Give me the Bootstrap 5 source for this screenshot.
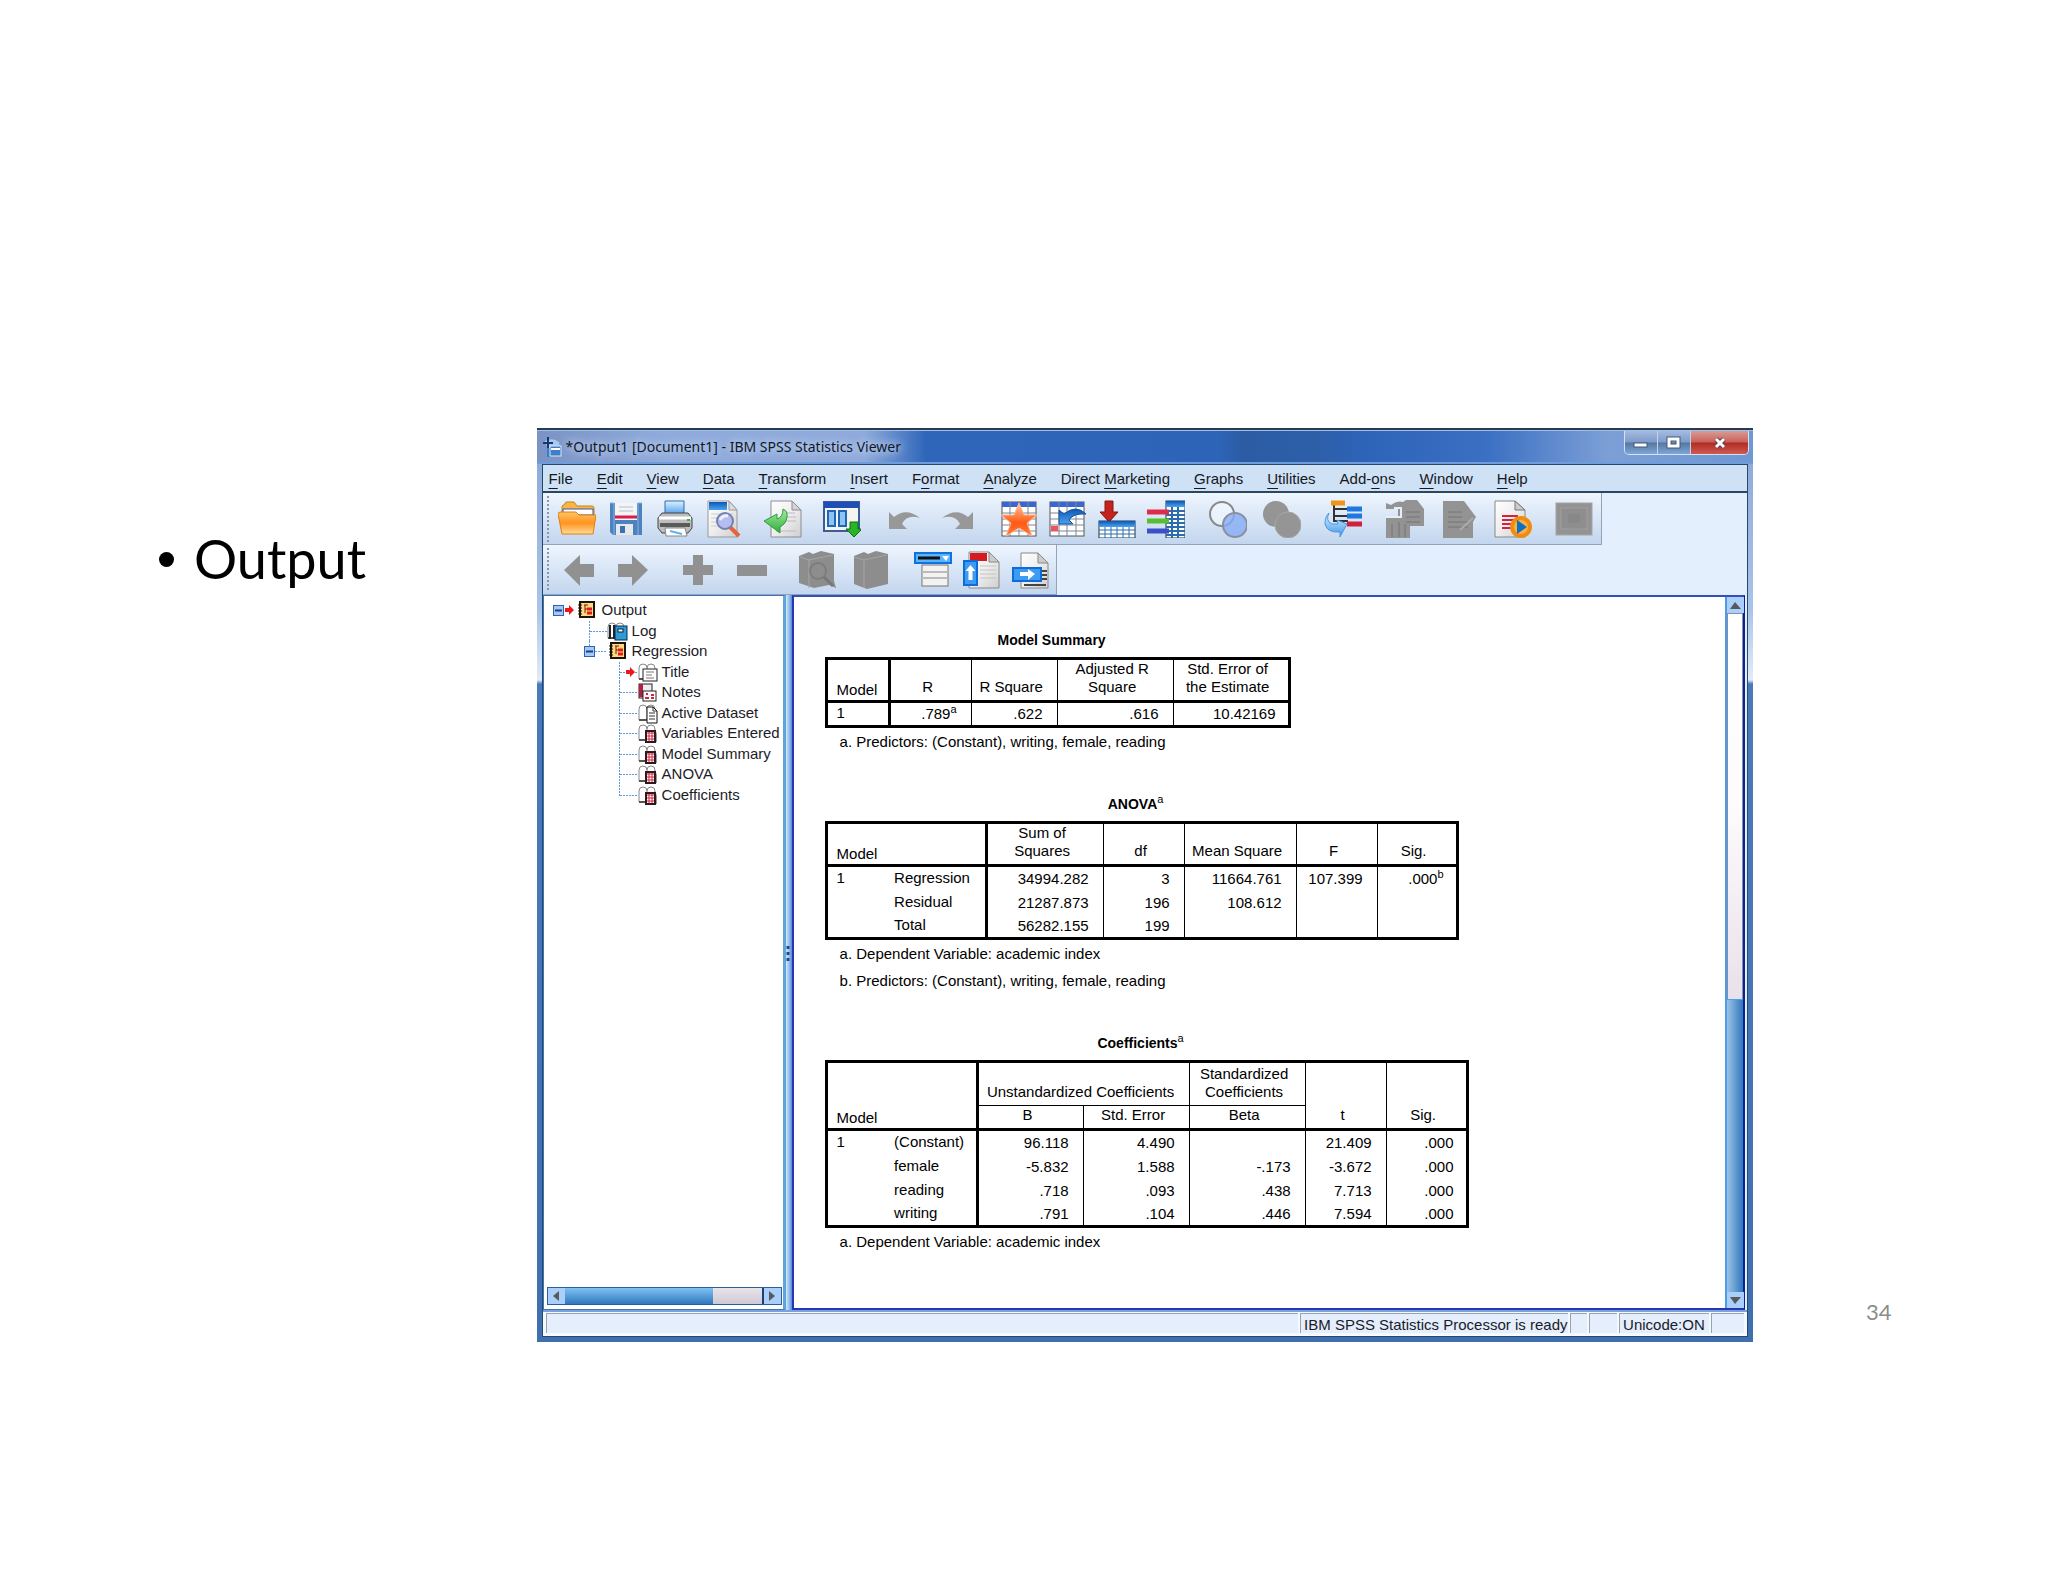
<!DOCTYPE html>
<html lang="en">
<head>
<meta charset="utf-8">
<meta name="viewport" content="width=device-width, initial-scale=1">
<title>Output</title>
<link rel="stylesheet" href="https://cdn.jsdelivr.net/npm/bootstrap@5.3.0/dist/css/bootstrap.min.css">
<style>
body{background:#fff;color:#000;font-family:"Liberation Sans",Arial,sans-serif;font-size:15px;line-height:20px}
.slide{min-height:100vh;padding-top:428px}
.side-l{width:26.2%;flex:none;padding-left:159px;padding-top:99px}
.side-r{flex:1 1 0;padding-left:113px;padding-bottom:18px}
.bullets{font-family:Lato,sans-serif;font-size:54px;line-height:64px}
.bullets li::before{content:"";width:15px;height:15px;border-radius:50%;background:#000}
.bullets li{gap:20px}
.pageno{font-family:Lato,sans-serif;font-size:22px;line-height:24px;color:#8c8c8c}
/* window frame */
.win{width:59.4%;flex:none;min-width:1110px;border-top:2px solid #2c3a50;background:linear-gradient(#8aa6d6 0,#a9c4e8 180px,#e2ecf8 250px,#4a7ab8 254px,#3f6fb0 100%);padding:0 5px 5px 5px}
.titlebar{height:34px;margin:0 -5px;padding-left:5px;border-top:1px solid #9cc0ec;border-bottom:2px solid #6f9ddb;background:linear-gradient(90deg,#7a92c4 0,#8faadb 10%,#8faadb 27%,#2f66b9 32%,#2e64b8 56%,#2b5ca4 58%,#2d5fa8 64%,#2e64b8 68%,#3a6fc2 78%,#7c9fd6 88%,#6f97d2 100%)}
.titlebar h1{font-family:"Noto Sans",sans-serif;font-size:14px;line-height:26px;font-weight:400;color:#101828;text-shadow:0 0 8px #c4d6f2,0 0 8px #c4d6f2}
.capbtns{height:24px;border:1px solid #d4e2f6;border-top:0;border-radius:0 0 5px 5px;overflow:hidden}
.capbtns button{border:0;padding:0;border-right:1px solid #c3d3ea;background:linear-gradient(#a5bbdf,#7d9bcc 48%,#54789f 52%,#7fa6d8);width:33px;display:flex;align-items:center;justify-content:center}
.capbtns .b-close{width:57px;border-right:0;background:linear-gradient(#d99c96,#c8625a 48%,#b02c24 52%,#cf5b50)}
.client{border:1px solid #24486e;background:#e4effd}
.menus{height:28px;background:#cfe1f5;border-bottom:2px solid #2b4660;padding-left:6px;gap:24px;line-height:27px}
.menus a{color:#15181f;text-decoration:none}
.menus u{text-underline-offset:4px;text-decoration-thickness:1px}
.bars{height:102px}
.tb{align-items:center;border-right:1px solid #93a3b5;border-bottom:1px solid #93a3b5;background:linear-gradient(#eef5fe,#c3d6ee);position:relative;padding:0 2px 0 10px}
.tb1{height:52px;gap:10px}.tb2{height:50px;gap:11px;padding:0 0 0 9px}
.tb::before{content:"";position:absolute;left:3px;top:2px;bottom:2px;width:4px;background:radial-gradient(#8797ab 1px,transparent 1px) 0 0/4px 4px}
.tb button{border:0;background:none;padding:0;width:49px;height:48px;display:flex;align-items:center;justify-content:center}
.tb .wide button{width:54px}
.tb svg{width:38px;height:38px}
/* panes */
.tree-pane{width:243px;flex:none;background:#fff;border:1px solid #3f74b4;border-right:3px solid #62a3d8;padding:4px 1px 4px 3px}
.splitter{width:6px;flex:none;background:linear-gradient(90deg,#cfeafb,#8ab9ee 60%,#5d86d0)}
.out-pane{border:2px solid #2a35b4;border-top-color:#3350b8;border-right:2px solid #0d2190;background:#fff;margin-right:2px}
.tree{height:205px;display:grid;grid-auto-rows:1fr;margin:0;padding:0 0 0 3px;list-style:none}
.tree a{display:flex;align-items:center;color:#1c1c28;text-decoration:none;white-space:nowrap}
.tree svg{height:20px;flex:none;overflow:visible}
.hbar{height:18px;border:1px solid #2b5f9c}
.hbar button,.vbar button{border:0;padding:0;background:#a9cffa;width:17px;height:16px;display:flex;align-items:center;justify-content:center;flex:none}
.hbar .thumb{flex:150 1 0;background:linear-gradient(#7fc2f2,#2f78be)}
.hbar .track{flex:49 1 0;background:linear-gradient(#e9e4ea,#cfc9d6);border-right:2px solid #1e3f78}
.vbar{width:18px;flex:none;border-left:2px solid #4f9be8}
.vbar .thumb{flex:291 1 0;background:linear-gradient(90deg,#9cc4e4,#2f78be)}
.vbar .track{flex:384 1 0;background:linear-gradient(#fff 0,#fdfbfb 50%,#e9e1ea 100%);border:1px solid #8091a8;border-bottom:1px solid #4fa0ea}
/* pivot tables */
.out{padding:33px 0 53px 31px}
.out section{width:max-content;margin-bottom:39px}
.out section:last-child{margin-bottom:0}
.out h2{font-size:14px;line-height:20px;font-weight:700;margin:0 0 7px;padding-right:12px;text-align:center}
.out sup{font-size:11px;top:-6px}
.out h2 sup{font-weight:400}
.pv{table-layout:fixed;border-collapse:collapse;border:3px solid #000;line-height:18px}
.pv th{font-weight:400;text-align:center;vertical-align:bottom;padding:0 10px 4px 4px;border:1px solid #000;border-bottom:3px solid #000}
.pv th.grp{border-bottom-width:1px;height:44px;padding-bottom:4px}
.pv th.sub-h{border-bottom-width:3px;vertical-align:top;height:24px;padding-bottom:0}
.pv td{text-align:right;padding:0 14px 0 0;height:24px;border-left:1px solid #000;border-right:1px solid #000}
.pv td:last-child{padding-right:12px}
.pv tbody tr:first-child td{height:25px}
.pv .stub{text-align:left;border-right:3px solid #000;padding:0 0 1px 9px}
.pv td.stub{padding-bottom:2px}
.pv td.num{border-right:0;text-align:left;padding:0 0 2px 9px}
.pv td.num+td.stub{border-left:0;padding-left:5px}
.notes{padding-left:15px;line-height:27px}
.notes p{margin:0}
/* status bar */
.status{height:26px;border-top:2px solid #7aa3dc;border-bottom:1px solid #fff;padding:1px 3px 2px;background:#f4f8ff;gap:2px}
.status div{border-left:1px solid #97a3b1;border-top:1px solid #97a3b1;background:#e4eefd;padding-left:3px;color:#1a1c26;white-space:nowrap;line-height:21px}
.s1{width:268px}.s2{width:17px}.s3{width:28px}.s4{width:90px}.s5{width:33px}
</style>
<script src="https://cdn.jsdelivr.net/npm/bootstrap@5.3.0/dist/js/bootstrap.bundle.min.js"></script>
</head>
<body>
<svg width="0" height="0" class="position-absolute" aria-hidden="true">
<defs>
<linearGradient id="gOr" x1="0" y1="0" x2="0" y2="1"><stop offset="0" stop-color="#ffc468"/><stop offset=".5" stop-color="#ff9420"/><stop offset="1" stop-color="#ffdc9a"/></linearGradient>
<linearGradient id="gPg" x1="0" y1="0" x2="1" y2="1"><stop offset="0" stop-color="#fff"/><stop offset=".5" stop-color="#eee"/><stop offset="1" stop-color="#cfcfcf"/></linearGradient>
<linearGradient id="gBl" x1="0" y1="0" x2="0" y2="1"><stop offset="0" stop-color="#0a58b8"/><stop offset="1" stop-color="#4aa3ee"/></linearGradient>
<linearGradient id="gLb" x1="0" y1="0" x2="0" y2="1"><stop offset="0" stop-color="#dff3ff"/><stop offset="1" stop-color="#3a94ea"/></linearGradient>
<linearGradient id="gSt" x1="0" y1="0" x2="0" y2="1"><stop offset="0" stop-color="#ffc9a0"/><stop offset=".6" stop-color="#ff5a14"/><stop offset="1" stop-color="#ff7a3a"/></linearGradient>
<linearGradient id="gGn" x1="0" y1="0" x2="0" y2="1"><stop offset="0" stop-color="#a4eaa0"/><stop offset="1" stop-color="#2fae3a"/></linearGradient>
<g id="page"><path d="M5 1h21l9 9v27H5z" fill="url(#gPg)" stroke="#8e8e8e"/><path d="M26 1v9h9z" fill="#d4d4d4" stroke="#8e8e8e"/></g>
<g id="book"><path d="M1 17V6q0-4 4-4t4 4q0-4 4-4t4 4v11z" fill="#fff" stroke="#888"/><path d="M1 17h17" stroke="#555" stroke-width="2"/><path d="M9 6v12" stroke="#888"/></g>
<g id="out-ic"><rect x="2" y="2" width="14" height="15" fill="#ffd980" stroke="#1c1408" stroke-width="2"/><path d="M0 5h4M0 8h4M0 11h4M0 14h4" stroke="#1c1408"/><path d="M6 5h4M7 5v8M7 9h2" stroke="#7a1410" fill="none"/><path d="M9 9h5M9 13h5" stroke="#e01c1c" stroke-width="3"/></g>
<g id="tab-ic"><use href="#book"/><path d="M16 6q3 2 3 5v8h-2z" fill="#999"/><rect x="8" y="8" width="9" height="11" fill="#fff" stroke="#2c1a20" stroke-width="2"/><path d="M9 10h7M9 13h7M9 16h7" stroke="#d8203a"/><path d="M11 9v9M14 9v9" stroke="#d8203a"/></g>
<g id="mns"><rect x=".5" y=".5" width="10" height="10" fill="#a6c8f4" stroke="#2c62b0"/><path d="M2 5.500h7" stroke="#17408c" stroke-width="2"/></g>
<path id="rarr" d="M0 3h4V0l5 5-5 5V7H0z" fill="#f0141c"/>
</defs>
</svg>

<main class="slide">
<div class="d-flex">
<div class="side-l"><ul class="bullets list-unstyled m-0"><li class="d-flex align-items-center">Output</li></ul></div>

<div class="win">
<header class="titlebar d-flex justify-content-between">
 <div class="d-flex align-items-center">
  <svg width="20" height="20" viewBox="0 0 20 20"><path d="M3 4q8-4 14 1l2 13H8z" fill="#a9c9ee"/><path d="M1 6h10M6 0v12" stroke="#12386e" stroke-width="2"/><path d="M5 11h4v9H5z" fill="#3d7fc6"/><rect x="8" y="9" width="11" height="10" fill="#3f7fc8" stroke="#d7e8fb"/><path d="M9 12h9" stroke="#fff" stroke-width="2"/></svg>
  <h1 class="m-0 ms-1">*Output1 [Document1] - IBM SPSS Statistics Viewer</h1>
 </div>
 <div class="capbtns d-flex me-1">
  <button aria-label="Minimize"><svg width="16" height="14"><rect x="1" y="7" width="13" height="4" fill="#fff" stroke="#46597a"/></svg></button>
  <button aria-label="Maximize"><svg width="16" height="14"><rect x="3" y="3" width="9" height="7" fill="none" stroke="#46597a" stroke-width="5"/><rect x="3" y="3" width="9" height="7" fill="none" stroke="#fff" stroke-width="3"/></svg></button>
  <button class="b-close" aria-label="Close"><svg width="16" height="14"><path d="M4 3l8 8M12 3l-8 8" stroke="#6b3a44" stroke-width="5"/><path d="M4 3l8 8M12 3l-8 8" stroke="#fff" stroke-width="3"/></svg></button>
 </div>
</header>
<div class="client">
<nav class="menus d-flex">
<a href="#"><u>F</u>ile</a><a href="#"><u>E</u>dit</a><a href="#"><u>V</u>iew</a><a href="#"><u>D</u>ata</a><a href="#"><u>T</u>ransform</a><a href="#"><u>I</u>nsert</a><a href="#">F<u>o</u>rmat</a><a href="#"><u>A</u>nalyze</a><a href="#">Direct <u>M</u>arketing</a><a href="#"><u>G</u>raphs</a><a href="#"><u>U</u>tilities</a><a href="#">Add-<u>o</u>ns</a><a href="#"><u>W</u>indow</a><a href="#"><u>H</u>elp</a>
</nav>
<div class="bars d-flex flex-column align-items-start">
<div class="tb tb1 d-flex" role="toolbar" aria-label="Main">
 <div class="d-flex">
 <button aria-label="Open"><svg viewBox="0 0 38 38"><path d="M4 33V7q0-2 2-2l2-3h8l3 4h15q2 0 2 2v10z" fill="#f7b646" stroke="#c98412"/><path d="M5 9h30v6H5z" fill="#fff" stroke="#3a56b8"/><path d="M0 14q0-2 3-2h15l3 3h17l-3 19H4z" fill="url(#gOr)" stroke="#e07f10"/></svg></button>
 <button aria-label="Save"><svg viewBox="0 0 38 38"><path d="M3 3h32v32H6l-3-3z" fill="#4d82c0"/><path d="M3 3h4v32M35 3h-4v32" stroke="#86b2e0" fill="none"/><rect x="8" y="3" width="22" height="17" fill="#f4f4f6"/><path d="M12 7h14M12 11h14" stroke="#b8bcc8"/><path d="M8 17h22" stroke="#d81e48" stroke-width="3"/><rect x="9" y="24" width="17" height="11" fill="#e6e8ec"/><rect x="13" y="26" width="5" height="7" fill="#3d72b0"/></svg></button>
 <button aria-label="Print"><svg viewBox="0 0 38 38"><path d="M9 1h19v15H9z" fill="url(#gLb)" stroke="#2c6cb0"/><path d="M6 13h26l4 5v10l-4 5H6l-4-5V18z" fill="#bdbdbd" stroke="#444"/><path d="M3 18h32" stroke="#fff" stroke-width="3"/><path d="M4 23h30v4H4z" fill="#5a5a5a"/><path d="M31 20h3" stroke="#3ab43a" stroke-width="2"/><path d="M9 28h20l2 8H10z" fill="#fff" stroke="#888"/><path d="M14 31l12 3" stroke="#6ab0e8" stroke-width="2"/></svg></button>
 <button aria-label="Print preview"><svg viewBox="0 0 38 38"><path d="M3 1h21l8 9v27H3z" fill="url(#gPg)" stroke="#999"/><path d="M4 2h18v8H4z" fill="url(#gBl)"/><path d="M24 1v9h8z" fill="#ddd" stroke="#999"/><path d="M6 14h22M6 18h22M6 22h22M6 26h22" stroke="#ccc"/><path d="M25 27l9 9" stroke="#e8633a" stroke-width="4"/><circle cx="20" cy="21" r="8" fill="#b3bdf0" stroke="#7680ae" stroke-width="2"/><path d="M15 20q3-5 8-4" stroke="#eef" stroke-width="3" fill="none"/></svg></button>
 </div>
 <div><button aria-label="Export"><svg viewBox="0 0 38 38"><use href="#page" x="2"/><path d="M22 13h9M23 17h9M20 21h12M12 31h20" stroke="#bbb"/><path d="M19 9q5 2 4 8-1 7-7 10v6L0 21l13-7v5q6-2 6-10z" fill="url(#gGn)" stroke="#2f9a3c"/></svg></button></div>
 <div><button aria-label="Recall dialog"><svg viewBox="0 0 38 38"><rect x="1" y="2" width="35" height="29" fill="#f4f4f0" stroke="#3c5c98" stroke-width="2"/><path d="M1 2h35v6H1z" fill="#1d4fb4"/><rect x="5" y="11" width="7" height="15" fill="#8cc4f4" stroke="#1f68b8" stroke-width="2"/><rect x="16" y="11" width="7" height="15" fill="#8cc4f4" stroke="#1f68b8" stroke-width="2"/><path d="M27 22h8v7h4l-8 8-8-8h4z" fill="#28b428" stroke="#107010"/></svg></button></div>
 <div class="d-flex wide">
 <button aria-label="Undo"><svg viewBox="0 0 38 38"><path d="M4 12l5 5q12-10 26 1-13-4-18 6l5 5H4z" fill="#989898"/></svg></button>
 <button aria-label="Redo"><svg viewBox="0 0 38 38"><path d="M34 12l-5 5Q17 7 3 18q13-4 18 6l-5 5h18z" fill="#989898"/></svg></button>
 </div>
 <div class="d-flex">
 <button aria-label="Go to data"><svg viewBox="0 0 38 38"><rect x="2" y="2" width="34" height="34" fill="#fff" stroke="#555"/><path d="M2 2h34v5H2z" fill="#3a66d0"/><path d="M2 13h34M2 19h34M2 25h34M2 31h34M10 2v34M19 2v34M28 2v34" stroke="#7d8796"/><path d="M19 3l5 12h13l-10 8 5 13-13-8-13 8 5-13L1 15h13z" fill="url(#gSt)" stroke="#ffb48c"/></svg></button>
 <button aria-label="Go to case"><svg viewBox="0 0 38 38"><rect x="1" y="2" width="34" height="34" fill="#fff" stroke="#555"/><path d="M1 2h34v5H1z" fill="#3a66d0"/><path d="M1 13h34M1 19h34M1 25h34M1 31h34M10 2v34M18 2v34M27 2v34" stroke="#7d8796"/><path d="M2 26h7v5H2z" fill="#f05060"/><path d="M10 10v14h14l-4-4q4-7 17-6Q27 4 15 14z" fill="url(#gBl)" stroke="#1f4e98"/></svg></button>
 <button aria-label="Go to variable"><svg viewBox="0 0 38 38"><path d="M7 1h8v11h5l-9 10-9-10h5z" fill="#c4221c" stroke="#8c1410"/><rect x="1" y="21" width="36" height="17" fill="#fff" stroke="#234"/><path d="M1 21h36v6H1z" fill="url(#gBl)"/><path d="M1 30h36M1 34h36M7 27v11M13 27v11M19 27v11M25 27v11M31 27v11" stroke="#2a6cae"/></svg></button>
 <button aria-label="Variables"><svg viewBox="0 0 38 38"><rect x="19" y="1" width="19" height="37" fill="#fff" stroke="#234"/><path d="M19 1h19v6H19z" fill="url(#gBl)"/><path d="M19 11h19M19 15h19M19 19h19M19 23h19M19 27h19M19 31h19M19 35h19M25 7v31M31 7v31" stroke="#2a6cae" stroke-width="2"/><path d="M0 12h22" stroke="#e02c4c" stroke-width="5"/><path d="M0 21h22" stroke="#58c030" stroke-width="5"/><path d="M0 31h22" stroke="#3a50c8" stroke-width="5"/></svg></button>
 </div>
 <div class="d-flex wide">
 <button aria-label="Use sets"><svg viewBox="0 0 38 38"><circle cx="13" cy="14" r="12" fill="#f0f6ff" fill-opacity=".7" stroke="#888" stroke-width="2"/><circle cx="26" cy="25" r="12" fill="#86acf4" fill-opacity=".8" stroke="#8a8fa0" stroke-width="2"/></svg></button>
 <button aria-label="Show all"><svg viewBox="0 0 38 38"><circle cx="13" cy="14" r="13" fill="#959595"/><circle cx="25" cy="25" r="13" fill="#959595" stroke="#a6a6a6"/></svg></button>
 </div>
 <div><button aria-label="Select last output"><svg viewBox="0 0 38 38"><path d="M10 4v17h14M10 9h16M10 16h16" stroke="#333" stroke-width="2" fill="none"/><path d="M7 3h14" stroke="#f09418" stroke-width="5"/><path d="M23 9h15M23 16h15" stroke="#1f78e0" stroke-width="5"/><path d="M23 24h15" stroke="#d0203c" stroke-width="5"/><path d="M5 13q-4 8 3 11h6l-1-4 10 4-7 13v-5Q3 33 1 24q0-8 4-11z" fill="url(#gLb)" stroke="#4a98e0"/></svg></button></div>
 <div class="d-flex wide">
 <button aria-label="Designate window"><svg viewBox="0 0 38 38"><path d="M0 3l5 2q6-5 12-3l3-2h11l7 9v17H24v12H0V17h12V9H0z" fill="#939393"/><path d="M8 8h7v9H0" stroke="#e6eefa" stroke-width="2" fill="none"/><path d="M20 12h14M20 17h14M20 22h14M6 24v13M13 22v15M19 24v13" stroke="#757575"/></svg></button>
 <button aria-label="Run script"><svg viewBox="0 0 38 38"><path d="M3 1h21l12 16-3 5v16H3z" fill="#939393"/><path d="M8 12h14M8 17h14M8 22h22M8 27h20" stroke="#757575"/><path d="M20 30l13-12" stroke="#aaa" stroke-width="2"/></svg></button>
 <button aria-label="Create script"><svg viewBox="0 0 38 38"><path d="M1 1h20l10 9v27H1z" fill="url(#gPg)" stroke="#888"/><path d="M21 1v9h10z" fill="#ccc" stroke="#777"/><path d="M8 16h16M8 20h12M8 24h12M8 28h10" stroke="#d82040" stroke-width="2"/><circle cx="27" cy="27" r="9" fill="#f8b04c" stroke="#f08c10" stroke-width="4"/><path d="M23 20l10 7-10 7z" fill="#0a72c0"/></svg></button>
 </div>
 <div><button aria-label="Window"><svg viewBox="0 0 38 38"><rect x="1" y="3" width="36" height="32" fill="#939393" stroke="#a4a4a4"/><rect x="6" y="8" width="26" height="21" fill="#8e8e8e" stroke="#9f9f9f"/><path d="M13 14h12v9H13z" fill="#888"/></svg></button></div>
</div>
<div class="tb tb2 d-flex" role="toolbar" aria-label="Outline">
 <div class="d-flex wide">
 <button aria-label="Back"><svg viewBox="0 0 38 38"><path d="M4 19L20 4v9h14v13H20v9z" fill="#919191"/></svg></button>
 <button aria-label="Forward"><svg viewBox="0 0 38 38"><path d="M34 19L18 4v9H4v13h14v9z" fill="#919191"/></svg></button>
 </div>
 <div class="d-flex wide">
 <button aria-label="Expand"><svg viewBox="0 0 38 38"><path d="M14 4h10v10h10v10H24v10H14V24H4V14h10z" fill="#919191"/></svg></button>
 <button aria-label="Collapse"><svg viewBox="0 0 38 38"><path d="M4 14h30v11H4z" fill="#919191"/></svg></button>
 </div>
 <div class="d-flex wide">
 <button aria-label="Show"><svg viewBox="0 0 38 38"><path d="M1 5l10-4 4 2 8-3 13 3v27l2 7-7-3-15 3-15-5z" fill="#8d8d8d"/><path d="M2 6l9 3v28M11 9l24-5" stroke="#a6a6a6" fill="none"/><circle cx="20" cy="20" r="8" fill="none" stroke="#7d7d7d" stroke-width="2"/><path d="M26 26l9 9" stroke="#777" stroke-width="3"/></svg></button>
 <button aria-label="Hide"><svg viewBox="0 0 38 38"><path d="M2 5l10-4 4 2 8-3 12 3v30l-21 5-13-5z" fill="#8d8d8d"/><path d="M2 6l10 3v28M12 9l23-5" stroke="#a6a6a6" fill="none"/></svg></button>
 </div>
 <div class="d-flex">
 <button aria-label="Heading"><svg viewBox="0 0 38 38"><rect x="8" y="14" width="26" height="21" fill="#f2f2f2" stroke="#777"/><path d="M8 21h26M8 27h26" stroke="#bbb" stroke-width="2"/><rect x="1" y="2" width="36" height="10" fill="#5ab4fa" stroke="#0f72e0" stroke-width="2"/><path d="M4 7h22" stroke="#111" stroke-width="3"/><path d="M28 5h7l-3 5z" fill="#fff"/></svg></button>
 <button aria-label="Title"><svg viewBox="0 0 38 38"><path d="M6 1h20l10 10v26H6z" fill="url(#gPg)" stroke="#888"/><path d="M7 2h17v8H7z" fill="#d41c20"/><path d="M26 1v10h10z" fill="#ccc" stroke="#888"/><path d="M17 15h16M17 19h16M17 23h16M17 27h16" stroke="#c4c4c4"/><path d="M1 10h13v24H1z" fill="#3c9cf4" stroke="#0e6cd8" stroke-width="2"/><path d="M7.500 14l5 6h-3v9h-4v-9h-3z" fill="#fff"/></svg></button>
 <button aria-label="Insert text"><svg viewBox="0 0 38 38"><path d="M9 2h17l10 10v25H9z" fill="url(#gPg)" stroke="#888"/><path d="M26 2v10h10z" fill="#ccc" stroke="#888"/><path d="M12 34h22M30 20h5M30 24h5M30 28h5" stroke="#444" stroke-width="2"/><path d="M1 17h28v13H1z" fill="#3c9cf4" stroke="#0e6cd8" stroke-width="2"/><path d="M8 21h8v-3l7 5-7 6v-4H8z" fill="#fff"/></svg></button>
 </div>
</div>
</div>

<div class="d-flex">
<aside class="tree-pane d-flex flex-column justify-content-between">
<ul class="tree">
<li><a href="#"><svg width="52"><use href="#mns" x="3" y="5"/><use href="#rarr" x="15" y="5"/><use href="#out-ic" x="28"/></svg>Output</a></li>
<li><a href="#"><svg width="82"><path d="M39.500 0v21M40 10.500h17" stroke="#5c9cdc" stroke-dasharray="2 1"/><g transform="translate(57)"><use href="#book"/><path d="M3 4v14M7 4v14" stroke="#222" stroke-width="2"/><rect x="8" y="5" width="12" height="14" fill="#2f9ad4" stroke="#0b2a4a"/><rect x="11" y="8" width="5" height="3" fill="#fff" stroke="#123"/></g></svg>Log</a></li>
<li><a href="#"><svg width="82"><path d="M39.500 0v6M45 10.500h12" stroke="#5c9cdc" stroke-dasharray="2 1"/><use href="#mns" x="34" y="5"/><use href="#out-ic" x="59"/></svg>Regression</a></li>
<li><a href="#"><svg width="112"><path d="M69.500 0v21M70 10.500h17" stroke="#5c9cdc" stroke-dasharray="2 1"/><use href="#rarr" x="76" y="5"/><g transform="translate(88)"><use href="#book"/><rect x="5" y="7" width="14" height="12" fill="#fff" stroke="#222"/><path d="M8 10h8M8 13h6M8 16h8" stroke="#777"/></g></svg>Title</a></li>
<li><a href="#"><svg width="112"><path d="M69.500 0v21M70 10.500h17" stroke="#5c9cdc" stroke-dasharray="2 1"/><g transform="translate(88)"><rect x="1" y="2" width="13" height="14" fill="#eee" stroke="#222"/><path d="M3 2v13" stroke="#b02040" stroke-width="4"/><rect x="5" y="9" width="13" height="10" fill="#fff" stroke="#222"/><path d="M8 12h2M7 16h4M13 13h3M13 16h3" stroke="#d8203a" stroke-width="2"/></g></svg>Notes</a></li>
<li><a href="#"><svg width="112"><path d="M69.500 0v21M70 10.500h17" stroke="#5c9cdc" stroke-dasharray="2 1"/><g transform="translate(88)"><use href="#book"/><path d="M9 4h6l4 4v12H9z" fill="#fff" stroke="#111"/><path d="M15 4v4h4M11 10h6M11 13h6M11 16h6" stroke="#333" fill="none"/></g></svg>Active Dataset</a></li>
<li><a href="#"><svg width="112"><path d="M69.500 0v21M70 10.500h17" stroke="#5c9cdc" stroke-dasharray="2 1"/><use href="#tab-ic" x="88"/></svg>Variables Entered</a></li>
<li><a href="#"><svg width="112"><path d="M69.500 0v21M70 10.500h17" stroke="#5c9cdc" stroke-dasharray="2 1"/><use href="#tab-ic" x="88"/></svg>Model Summary</a></li>
<li><a href="#"><svg width="112"><path d="M69.500 0v21M70 10.500h17" stroke="#5c9cdc" stroke-dasharray="2 1"/><use href="#tab-ic" x="88"/></svg>ANOVA</a></li>
<li><a href="#"><svg width="112"><path d="M69.500 0v11M70 10.500h17" stroke="#5c9cdc" stroke-dasharray="2 1"/><use href="#tab-ic" x="88"/></svg>Coefficients</a></li>
</ul>
<div class="hbar d-flex"><button aria-label="Scroll left"><svg width="8" height="10"><path d="M7 0v10L1 5z" fill="#57595c"/></svg></button><div class="thumb"></div><div class="track"></div><button aria-label="Scroll right"><svg width="8" height="10"><path d="M1 0v10l6-5z" fill="#57595c"/></svg></button></div>
</aside>
<div class="splitter d-flex align-items-center"><svg width="6" height="18"><path d="M2 2v15" stroke="#1c4a92" stroke-width="3" stroke-dasharray="3 3"/></svg></div>
<div class="out-pane flex-grow-1 d-flex">
<div class="out flex-grow-1">
<section>
<h2>Model Summary</h2>
<table class="pv" style="width:466px"><colgroup><col style="width:63px"><col style="width:82px"><col style="width:86px"><col style="width:116px"><col></colgroup>
<thead><tr><th class="stub">Model</th><th>R</th><th>R Square</th><th>Adjusted R Square</th><th>Std. Error of the Estimate</th></tr></thead>
<tbody><tr><td class="stub">1</td><td>.789<sup>a</sup></td><td>.622</td><td>.616</td><td>10.42169</td></tr></tbody></table>
<div class="notes"><p>a. Predictors: (Constant), writing, female, reading</p></div>
</section>
<section>
<h2>ANOVA<sup>a</sup></h2>
<table class="pv" style="width:634px"><colgroup><col style="width:63px"><col style="width:97px"><col style="width:117px"><col style="width:81px"><col style="width:112px"><col style="width:81px"><col></colgroup>
<thead><tr><th class="stub" colspan="2">Model</th><th>Sum of<br>Squares</th><th>df</th><th>Mean Square</th><th>F</th><th>Sig.</th></tr></thead>
<tbody><tr><td class="num">1</td><td class="stub">Regression</td><td>34994.282</td><td>3</td><td>11664.761</td><td>107.399</td><td>.000<sup>b</sup></td></tr>
<tr><td class="num"></td><td class="stub">Residual</td><td>21287.873</td><td>196</td><td>108.612</td><td></td><td></td></tr>
<tr><td class="num"></td><td class="stub">Total</td><td>56282.155</td><td>199</td><td></td><td></td><td></td></tr></tbody></table>
<div class="notes"><p>a. Dependent Variable: academic index</p><p>b. Predictors: (Constant), writing, female, reading</p></div>
</section>
<section>
<h2>Coefficients<sup>a</sup></h2>
<table class="pv" style="width:644px"><colgroup><col style="width:63px"><col style="width:88px"><col style="width:106px"><col style="width:106px"><col style="width:116px"><col style="width:81px"><col></colgroup>
<thead><tr><th class="stub" colspan="2" rowspan="2">Model</th><th class="grp" colspan="2">Unstandardized Coefficients</th><th class="grp">Standardized Coefficients</th><th rowspan="2">t</th><th rowspan="2">Sig.</th></tr>
<tr><th class="sub-h">B</th><th class="sub-h">Std. Error</th><th class="sub-h">Beta</th></tr></thead>
<tbody><tr><td class="num">1</td><td class="stub">(Constant)</td><td>96.118</td><td>4.490</td><td></td><td>21.409</td><td>.000</td></tr>
<tr><td class="num"></td><td class="stub">female</td><td>-5.832</td><td>1.588</td><td>-.173</td><td>-3.672</td><td>.000</td></tr>
<tr><td class="num"></td><td class="stub">reading</td><td>.718</td><td>.093</td><td>.438</td><td>7.713</td><td>.000</td></tr>
<tr><td class="num"></td><td class="stub">writing</td><td>.791</td><td>.104</td><td>.446</td><td>7.594</td><td>.000</td></tr></tbody></table>
<div class="notes"><p>a. Dependent Variable: academic index</p></div>
</section>
</div>
<div class="vbar d-flex flex-column"><button aria-label="Scroll up"><svg width="11" height="7"><path d="M0 7h11L5 0z" fill="#57595c"/></svg></button><div class="track"></div><div class="thumb"></div><button aria-label="Scroll down"><svg width="11" height="7"><path d="M0 0h11L5 7z" fill="#57595c"/></svg></button></div>
</div>
</div>
<footer class="status d-flex"><div class="flex-grow-1"></div><div class="s1">IBM SPSS Statistics Processor is ready</div><div class="s2"></div><div class="s3"></div><div class="s4">Unicode:ON</div><div class="s5"></div></footer>
</div>
</div>

<div class="side-r d-flex align-items-end"><span class="pageno">34</span></div>
</div>
</main>
</body>
</html>
